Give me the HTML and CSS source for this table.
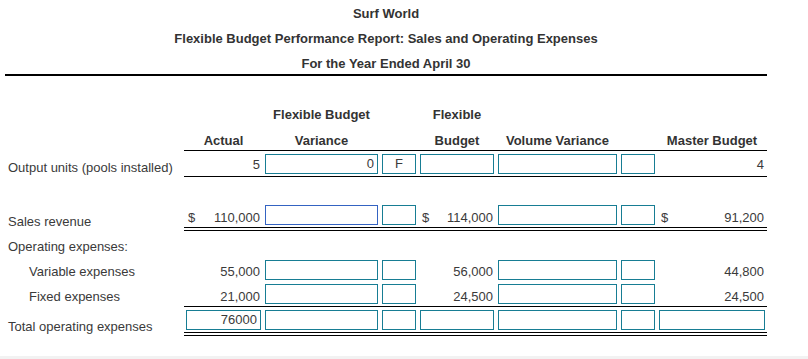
FILE: index.html
```html
<!DOCTYPE html>
<html>
<head>
<meta charset="utf-8">
<title>Surf World</title>
<link rel="stylesheet" href="styles.css">
</head>
<body>
<div class="page">
  <div class="title">
    <div>Surf World</div>
    <div>Flexible Budget Performance Report: Sales and Operating Expenses</div>
    <div>For the Year Ended April 30</div>
  </div>
  <table class="report">
    <colgroup>
      <col class="c-label"><col class="c-act"><col class="c-fbv"><col class="c-f"><col class="c-fb"><col class="c-vv"><col class="c-f"><col class="c-mb">
    </colgroup>
    <tr class="h1">
      <td class="lbl"></td><td></td><th>Flexible Budget</th><td></td><th>Flexible</th><td></td><td></td><td></td>
    </tr>
    <tr class="h2 rule">
      <td class="lbl"></td><th>Actual</th><th>Variance</th><td></td><th>Budget</th><th>Volume Variance</th><td></td><th>Master Budget</th>
    </tr>
    <tr class="r-out rule">
      <td class="lbl">Output units (pools installed)</td>
      <td class="num"><div class="amt"><span></span><span>5</span></div></td>
      <td><input class="box" type="text" value="0" readonly></td>
      <td><input class="box c" type="text" value="F" readonly></td>
      <td><input class="box" type="text" value="" readonly></td>
      <td><input class="box" type="text" value="" readonly></td>
      <td><input class="box" type="text" value="" readonly></td>
      <td class="num"><div class="amt"><span></span><span>4</span></div></td>
    </tr>
    <tr class="r-blank">
      <td class="lbl"></td><td></td><td></td><td></td><td></td><td></td><td></td><td></td>
    </tr>
    <tr class="r-sales dbl">
      <td class="lbl">Sales revenue</td>
      <td class="num"><div class="amt"><span>$</span><span>110,000</span></div></td>
      <td><input class="box active" type="text" value="" readonly></td>
      <td><input class="box" type="text" value="" readonly></td>
      <td class="num"><div class="amt"><span>$</span><span>114,000</span></div></td>
      <td><input class="box" type="text" value="" readonly></td>
      <td><input class="box" type="text" value="" readonly></td>
      <td class="num"><div class="amt"><span>$</span><span>91,200</span></div></td>
    </tr>
    <tr class="r-op">
      <td class="lbl">Operating expenses:</td><td></td><td></td><td></td><td></td><td></td><td></td><td></td>
    </tr>
    <tr class="r-var">
      <td class="lbl indent">Variable expenses</td>
      <td class="num"><div class="amt"><span></span><span>55,000</span></div></td>
      <td><input class="box" type="text" value="" readonly></td>
      <td><input class="box" type="text" value="" readonly></td>
      <td class="num"><div class="amt"><span></span><span>56,000</span></div></td>
      <td><input class="box" type="text" value="" readonly></td>
      <td><input class="box" type="text" value="" readonly></td>
      <td class="num"><div class="amt"><span></span><span>44,800</span></div></td>
    </tr>
    <tr class="r-fix rule">
      <td class="lbl indent">Fixed expenses</td>
      <td class="num"><div class="amt"><span></span><span>21,000</span></div></td>
      <td><input class="box" type="text" value="" readonly></td>
      <td><input class="box" type="text" value="" readonly></td>
      <td class="num"><div class="amt"><span></span><span>24,500</span></div></td>
      <td><input class="box" type="text" value="" readonly></td>
      <td><input class="box" type="text" value="" readonly></td>
      <td class="num"><div class="amt"><span></span><span>24,500</span></div></td>
    </tr>
    <tr class="r-total dbl">
      <td class="lbl">Total operating expenses</td>
      <td><input class="box" type="text" value="76000" readonly></td>
      <td><input class="box" type="text" value="" readonly></td>
      <td><input class="box" type="text" value="" readonly></td>
      <td><input class="box" type="text" value="" readonly></td>
      <td><input class="box" type="text" value="" readonly></td>
      <td><input class="box" type="text" value="" readonly></td>
      <td><input class="box" type="text" value="" readonly></td>
    </tr>
  </table>
</div>
</body>
</html>
```
FILE: styles.css
```css
* { box-sizing: border-box; }
html, body { margin: 0; padding: 0; }
body {
  background: #f2f2f2;
  font-family: "Liberation Sans", Arial, sans-serif;
  font-size: 13px;
  color: #3a3a3a;
}
.page {
  background: #fff;
  height: 356px;
  overflow: hidden;
}
.title {
  margin-left: 5px;
  width: 762px;
  padding-top: 6px;
  padding-bottom: 2px;
  border-bottom: 2px solid #000;
  display: flex;
  flex-direction: column;
  align-items: center;
  gap: 9px;
  font-weight: bold;
  line-height: 16px;
  color: #333;
}
.report {
  margin-top: 27px;
  width: 767px;
  table-layout: fixed;
  border-collapse: separate;
  border-spacing: 0;
}
.c-label { width: 184px; }
.c-act { width: 79px; }
.c-fbv { width: 117px; }
.c-f { width: 38px; }
.c-fb { width: 78px; }
.c-vv { width: 123px; }
.c-mb { width: 110px; }
.report td, .report th {
  padding: 0 2px;
  vertical-align: middle;
  white-space: nowrap;
  line-height: 16px;
}
.report th {
  font-weight: bold;
  text-align: center;
  color: #333;
}
.report .h1 th { padding-bottom: 2px; }
.report .h2 th { padding-top: 3px; }
.report .lbl { padding-left: 8px; }
.report .lbl.indent { padding-left: 29px; }

.report .r-out td.num { padding-top: 3px; }
.report .r-sales td.num { padding-top: 6px; }
.report .r-var td.num { padding-top: 4px; }
.report .r-fix td.num { padding-top: 6px; }

.report .r-out .lbl { padding-top: 7px; }
.report .r-sales .lbl { padding-top: 10px; }
.report .r-op .lbl { padding-top: 5px; }
.report .r-var .lbl { padding-top: 4px; }
.report .r-fix .lbl { padding-top: 5px; }
.report .r-total .lbl { padding-top: 10px; }

.rule > td:not(.lbl), .rule > th { border-bottom: 1px solid #000; }
.dbl > td:not(.lbl) { border-bottom: 4px double #000; }

.h1 { height: 25px; }
.h2 { height: 23px; }
.r-out { height: 26px; }
.r-blank { height: 25px; }
.r-sales { height: 29px; }
.r-op { height: 26px; }
.r-var { height: 25px; }
.r-fix { height: 25px; }
.r-total { height: 29px; }

.amt {
  display: flex;
  justify-content: space-between;
  padding: 0 1px 0 2px;
}
.box {
  display: block;
  width: 100%;
  height: 20px;
  margin: 0;
  padding: 0 3px;
  border: 1px solid #177d94;
  border-radius: 0;
  background: #fff;
  font: inherit;
  line-height: 18px;
  color: #3a3a3a;
  text-align: right;
  outline: none;
}
.box.c { text-align: center; }
.box.active { border-color: #3463c2; }
```
